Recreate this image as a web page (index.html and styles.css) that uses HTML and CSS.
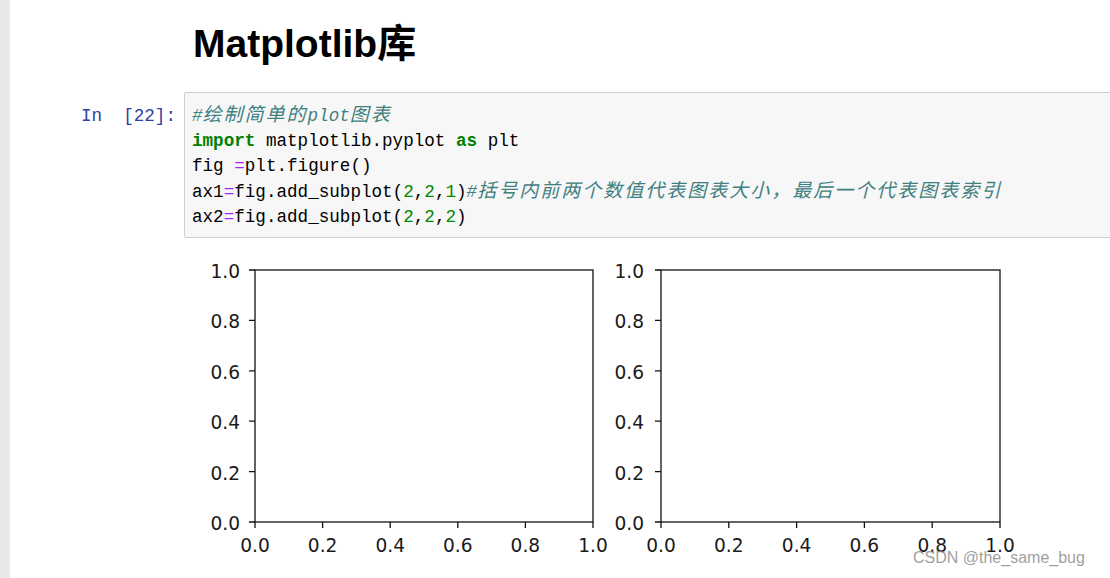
FILE: index.html
```html
<!DOCTYPE html>
<html>
<head>
<meta charset="utf-8">
<link rel="stylesheet" href="styles.css">
</head>
<body>
<div class="page">
  <div class="strip"></div>
  <div class="main">
    <h1 class="title">Matplotlib库</h1>
    <div class="cell">
      <div class="prompt">In&nbsp;&nbsp;[22]:</div>
      <div class="input">
<pre class="code"><span class="c">#<span class="cjk">绘制简单的</span>plot<span class="cjk">图表</span></span>
<span class="k">import</span> matplotlib.pyplot <span class="k">as</span> plt
fig <span class="o">=</span>plt.figure()
ax1<span class="o">=</span>fig.add_subplot(<span class="n">2</span>,<span class="n">2</span>,<span class="n">1</span>)<span class="c">#<span class="cjk">括号内前两个数值代表图表大小，最后一个代表图表索引</span></span>
ax2<span class="o">=</span>fig.add_subplot(<span class="n">2</span>,<span class="n">2</span>,<span class="n">2</span>)</pre>
      </div>
    </div>
    <div class="output">
      <svg class="figure" width="830" height="328" viewBox="0 0 830 328">
        <g class="axes" fill="none" stroke="#111" stroke-width="1.3">
          <rect x="63" y="20" width="338" height="252"/>
          <rect x="469" y="20" width="339" height="252"/>
          <path d="M57 20H63M57 70.4H63M57 120.8H63M57 171.2H63M57 221.6H63M57 272H63"/>
          <path d="M463 20H469M463 70.4H469M463 120.8H469M463 171.2H469M463 221.6H469M463 272H469"/>
          <path d="M63 272V278M130.6 272V278M198.2 272V278M265.8 272V278M333.4 272V278M401 272V278"/>
          <path d="M469 272V278M536.8 272V278M604.6 272V278M672.4 272V278M740.2 272V278M808 272V278"/>
        </g>
        <g class="ylab" text-anchor="end">
          <text x="48" y="28">1.0</text>
          <text x="48" y="78.4">0.8</text>
          <text x="48" y="128.8">0.6</text>
          <text x="48" y="179.2">0.4</text>
          <text x="48" y="229.6">0.2</text>
          <text x="48" y="280">0.0</text>
          <text x="452" y="28">1.0</text>
          <text x="452" y="78.4">0.8</text>
          <text x="452" y="128.8">0.6</text>
          <text x="452" y="179.2">0.4</text>
          <text x="452" y="229.6">0.2</text>
          <text x="452" y="280">0.0</text>
        </g>
        <g class="xlab" text-anchor="middle">
          <text x="63" y="302">0.0</text>
          <text x="130.6" y="302">0.2</text>
          <text x="198.2" y="302">0.4</text>
          <text x="265.8" y="302">0.6</text>
          <text x="333.4" y="302">0.8</text>
          <text x="401" y="302">1.0</text>
          <text x="469" y="302">0.0</text>
          <text x="536.8" y="302">0.2</text>
          <text x="604.6" y="302">0.4</text>
          <text x="672.4" y="302">0.6</text>
          <text x="740.2" y="302">0.8</text>
          <text x="808" y="302">1.0</text>
        </g>
      </svg>
    </div>
  </div>
</div>
<div class="watermark">CSDN @the_same_bug</div>
</body>
</html>
```

FILE: styles.css
```css
html, body {
  margin: 0;
  padding: 0;
  background: #ffffff;
}
body {
  width: 1110px;
  height: 578px;
  overflow: hidden;
  position: relative;
}
.page {
  display: flex;
  min-height: 578px;
}
.strip {
  width: 10px;
  flex: none;
  background: #e8e8e8;
}
.main {
  flex: 1;
  min-width: 0;
}
.title {
  margin: 21px 0 0 183px;
  font-family: "Liberation Sans", "Noto Sans CJK SC", Arial, sans-serif;
  font-weight: bold;
  font-size: 39px;
  line-height: 46px;
  color: #000;
}
.cell {
  display: flex;
  margin-top: 25px;
}
.prompt {
  width: 174px;
  flex: none;
  box-sizing: border-box;
  padding: 12px 8px 0 0;
  text-align: right;
  font-family: "Liberation Mono", monospace;
  font-size: 17.6px;
  line-height: 25.2px;
  color: #303f9f;
}
.input {
  flex: 1;
  margin-right: -6px;
  background: #f7f7f7;
  border: 1px solid #cfcfcf;
  border-radius: 2px;
  padding: 11px 0 7px 7px;
}
.code {
  margin: 0;
  height: 126px;
  font-family: "Liberation Mono", monospace;
  font-size: 17.6px;
  line-height: 25.2px;
  color: #000;
  white-space: pre;
}
.code .cjk {
  font-family: "Noto Sans CJK SC", sans-serif;
  font-size: 19px;
  line-height: 0;
  letter-spacing: 2px;
}
.c {
  color: #408080;
  font-style: italic;
}
.k {
  color: #008000;
  font-weight: bold;
}
.o {
  color: #aa22ff;
}
.n {
  color: #008800;
}
.output {
  padding: 12px 0 0 182px;
}
.figure {
  display: block;
}
.figure text {
  font-family: "DejaVu Sans", sans-serif;
  font-size: 18.6px;
  fill: #1a1a1a;
}
.watermark {
  position: absolute;
  left: 913px;
  top: 548px;
  font-family: "Liberation Sans", Arial, sans-serif;
  font-size: 16px;
  line-height: 20px;
  color: rgba(140, 140, 140, 0.85);
}
```
